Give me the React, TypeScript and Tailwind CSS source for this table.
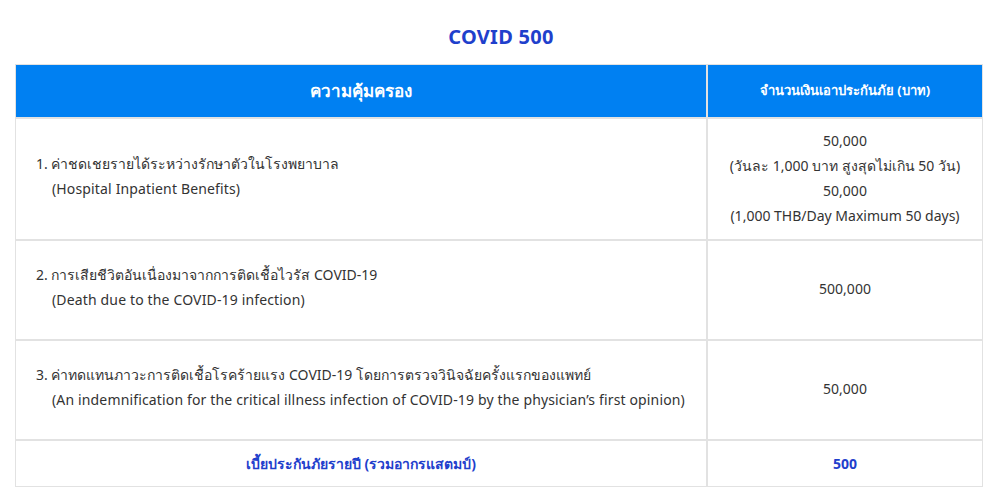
const rows = [
  {
    th: "1. ค่าชดเชยรายได้ระหว่างรักษาตัวในโรงพยาบาล",
    en: "(Hospital Inpatient Benefits)",
    amount: ["50,000", "(วันละ 1,000 บาท สูงสุดไม่เกิน 50 วัน)", "50,000", "(1,000 THB/Day Maximum 50 days)"],
    h: "h-[122px]",
  },
  {
    th: "2. การเสียชีวิตอันเนื่องมาจากการติดเชื้อไวรัส COVID-19",
    en: "(Death due to the COVID-19 infection)",
    amount: ["500,000"],
    h: "h-[100px]",
  },
  {
    th: "3. ค่าทดแทนภาวะการติดเชื้อโรคร้ายแรง COVID-19 โดยการตรวจวินิจฉัยครั้งแรกของแพทย์",
    en: "(An indemnification for the critical illness infection of COVID-19 by the physician’s first opinion)",
    amount: ["50,000"],
    h: "h-[100px]",
  },
];

export default function App() {
  return (
    <div className="bg-white min-h-[491px] font-['Noto_Sans','Open_Sans',sans-serif] text-[#333333]">
      <h1 className="pt-[23px] mb-[13px] text-center text-[20px] leading-[28px] font-bold tracking-[0.3px] text-[#1f40cc]">
        COVID 500
      </h1>
      <table className="ml-[15px] w-[968px] border-separate border-spacing-0 table-fixed">
        <colgroup>
          <col className="w-[692px]" />
          <col className="w-[276px]" />
        </colgroup>
        <thead>
          <tr className="h-[54px] bg-[#0080f2] text-white">
            <th className="border border-[#e2e2e2] text-[17px] font-bold">ความคุ้มครอง</th>
            <th className="border border-[#e2e2e2] text-[13px] font-bold">จำนวนเงินเอาประกันภัย (บาท)</th>
          </tr>
        </thead>
        <tbody className="text-[14px] leading-[25px]">
          {rows.map((r) => (
            <tr key={r.th} className={r.h}>
              <td className="border border-[#e2e2e2] pl-[20px] pr-2 pb-[6px] align-middle">
                <div>{r.th}</div>
                <div className="pl-[16px] tracking-[0.15px]">{r.en}</div>
              </td>
              <td className="border border-[#e2e2e2] text-center align-middle pb-[3px]">
                {r.amount.map((a, i) => (
                  <div key={i}>{a}</div>
                ))}
              </td>
            </tr>
          ))}
          <tr className="h-[47px] text-[#1f40cc] font-bold text-[14px]">
            <td className="border border-[#e2e2e2] text-center">เบี้ยประกันภัยรายปี (รวมอากรแสตมป์)</td>
            <td className="border border-[#e2e2e2] text-center">500</td>
          </tr>
        </tbody>
      </table>
    </div>
  );
}
